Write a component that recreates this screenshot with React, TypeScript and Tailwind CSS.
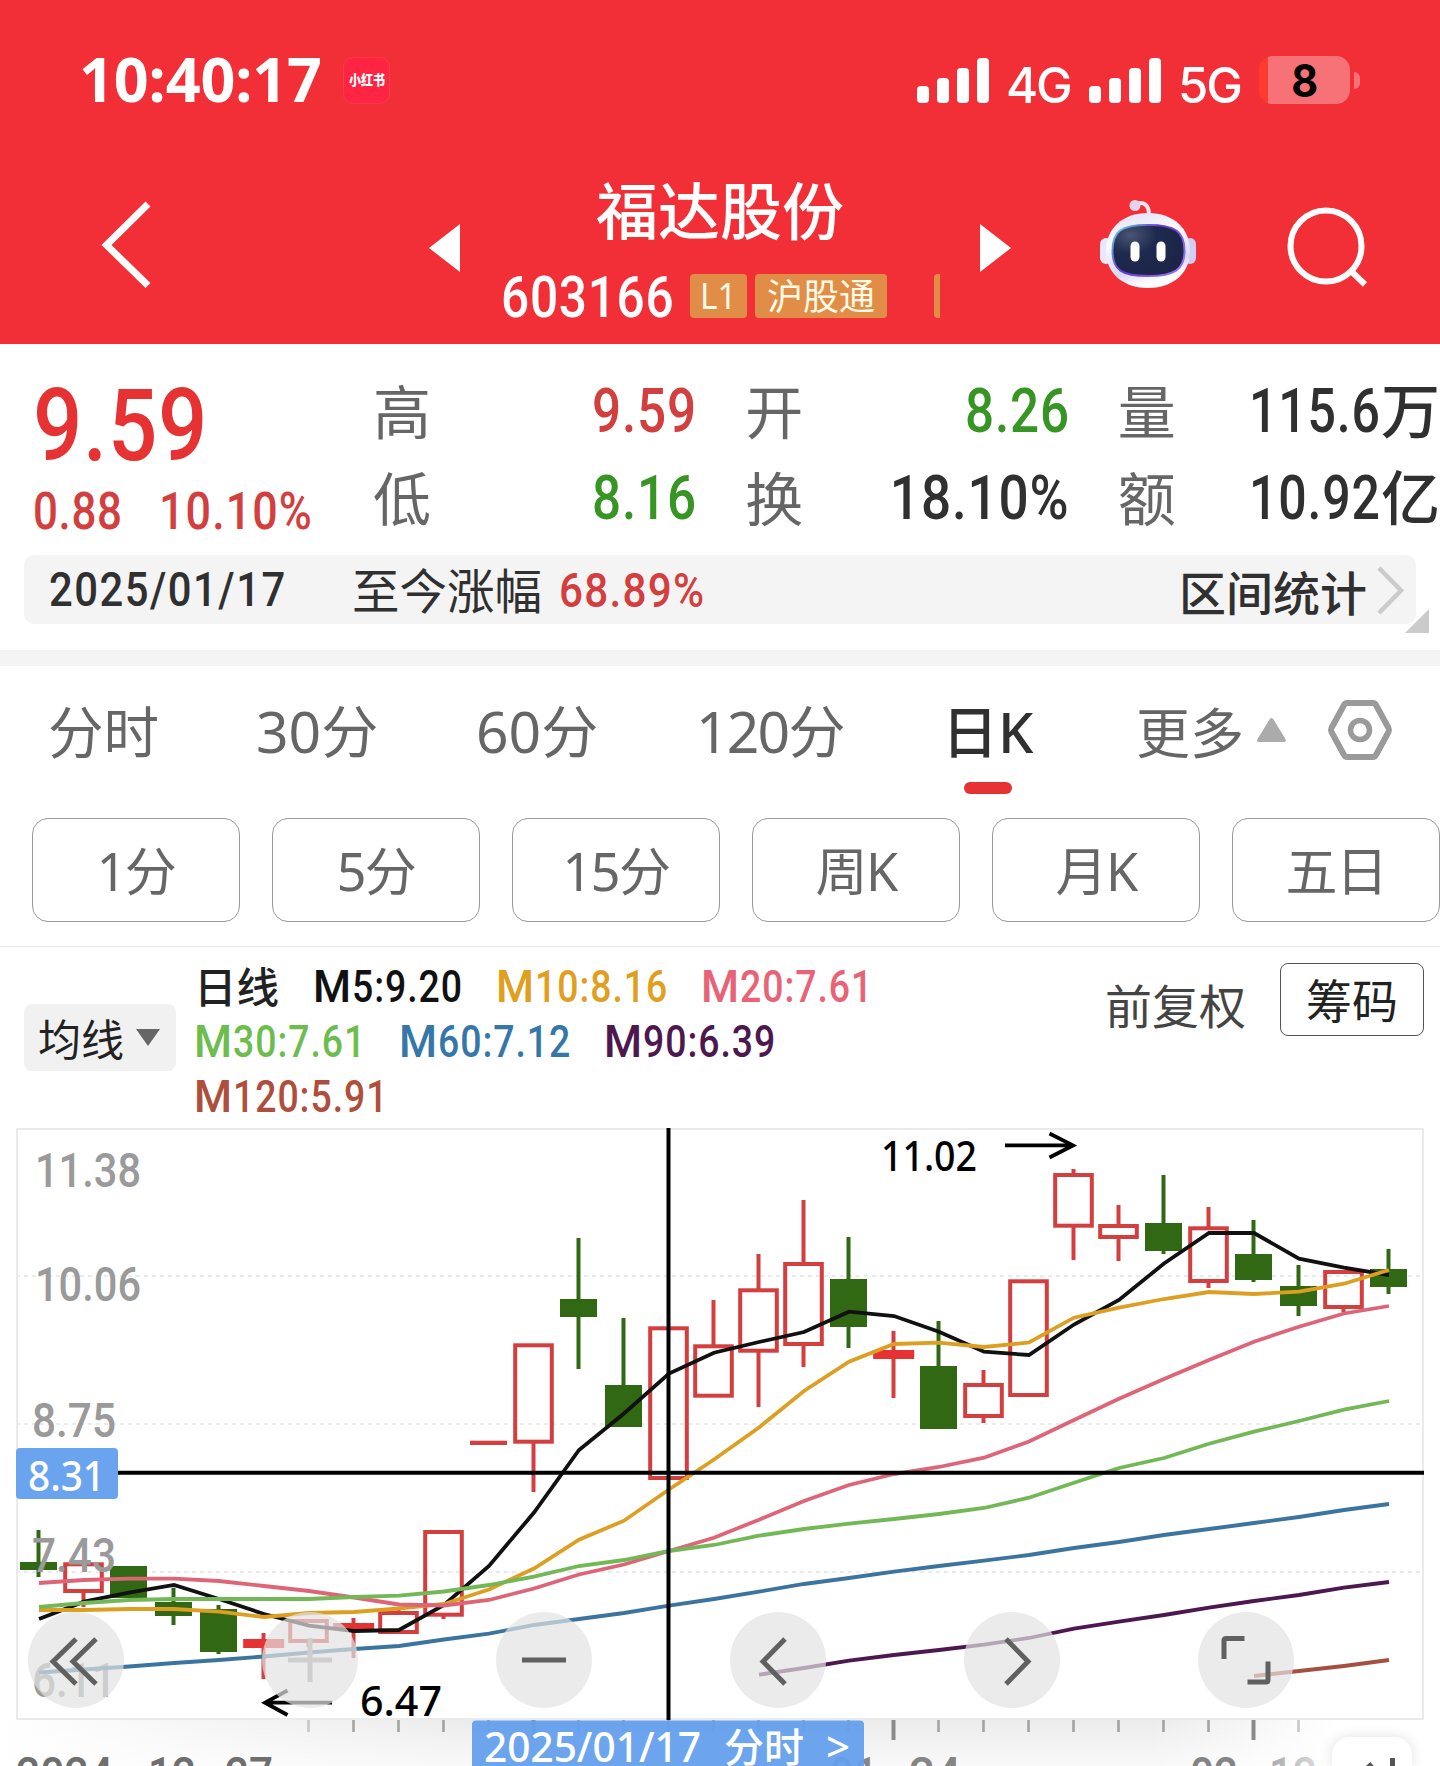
import type { ReactNode } from "react";

const CJK = "font-['Noto_Sans','Noto_Sans_CJK_SC',sans-serif]";
const DIN = "font-['Roboto','Noto_Sans_CJK_SC',sans-serif]";

type Candle = { kind: "up" | "down" | "flat"; top: number; bottom: number; high?: number; low?: number };

const candles: Candle[] = [
  { kind: "down", top: 1562, bottom: 1570, high: 1530, low: 1577 },
  { kind: "up", top: 1562.3, bottom: 1593, low: 1607 },
  { kind: "down", top: 1566, bottom: 1598 },
  { kind: "down", top: 1602, bottom: 1616, high: 1587.7, low: 1625 },
  { kind: "down", top: 1609, bottom: 1652, high: 1605, low: 1654 },
  { kind: "flat", top: 1639, bottom: 1648, high: 1633, low: 1679 },
  { kind: "up", top: 1619, bottom: 1643, low: 1647 },
  { kind: "flat", top: 1623, bottom: 1630, high: 1618, low: 1658 },
  { kind: "up", top: 1611, bottom: 1634, high: 1608 },
  { kind: "up", top: 1530, bottom: 1616.7, low: 1619 },
  { kind: "flat", top: 1440.7, bottom: 1445 },
  { kind: "up", top: 1343.3, bottom: 1443.7, low: 1492 },
  { kind: "down", top: 1299, bottom: 1317, high: 1238, low: 1369 },
  { kind: "down", top: 1385, bottom: 1427, high: 1318 },
  { kind: "up", top: 1326.3, bottom: 1480 },
  { kind: "up", top: 1344.3, bottom: 1397.7, high: 1300 },
  { kind: "up", top: 1288.3, bottom: 1352.7, high: 1254, low: 1407 },
  { kind: "up", top: 1262, bottom: 1346, high: 1200, low: 1367 },
  { kind: "down", top: 1279, bottom: 1327, high: 1237, low: 1348 },
  { kind: "flat", top: 1350, bottom: 1359, high: 1331, low: 1398 },
  { kind: "down", top: 1366, bottom: 1429, high: 1321 },
  { kind: "up", top: 1383, bottom: 1418, high: 1370, low: 1423 },
  { kind: "up", top: 1279.3, bottom: 1397 },
  { kind: "up", top: 1173, bottom: 1227.7, high: 1169, low: 1260 },
  { kind: "up", top: 1224, bottom: 1239, high: 1205, low: 1261 },
  { kind: "down", top: 1223, bottom: 1251, high: 1175, low: 1254 },
  { kind: "up", top: 1226.3, bottom: 1283, high: 1207, low: 1288 },
  { kind: "down", top: 1254, bottom: 1280, high: 1220, low: 1282 },
  { kind: "down", top: 1286, bottom: 1306, high: 1265, low: 1316 },
  { kind: "up", top: 1270, bottom: 1309, low: 1312 },
  { kind: "down", top: 1269, bottom: 1287, high: 1249, low: 1294 },
];

const averages: { color: string; start: number; ys: number[] }[] = [
  { color: "#3b759f", start: 0, ys: [1672.5, 1669.5, 1666.5, 1663, 1660, 1656.5, 1652.5, 1649, 1646, 1639.5, 1633.7, 1625, 1619, 1613, 1605.7, 1599, 1591.7, 1584, 1578, 1571.7, 1566, 1560.7, 1555, 1548, 1542, 1535, 1529, 1523, 1517, 1510, 1504] },
  { color: "#4d174f", start: 16, ys: [1674.7, 1668, 1660.7, 1655, 1650, 1644.7, 1638, 1628.7, 1621.7, 1615, 1607.7, 1601, 1595, 1587.7, 1582] },
  { color: "#a45040", start: 27, ys: [1676, 1671, 1666, 1660] },
  { color: "#111111", start: 0, ys: [1619, 1601.7, 1592.7, 1585, 1599, 1614, 1625.7, 1631, 1630, 1605, 1566, 1512.5, 1450, 1413.5, 1373.5, 1352.7, 1342, 1332, 1311.7, 1316, 1331.7, 1351.7, 1355, 1324.5, 1300, 1263.5, 1233, 1233, 1258.7, 1267.7, 1275] },
  { color: "#dd9f22", start: 0, ys: [1610, 1610, 1609, 1609, 1611.7, 1617, 1613, 1612, 1608.5, 1604, 1589.5, 1568.5, 1539.7, 1520.7, 1489.5, 1459.5, 1427.5, 1391, 1361.7, 1344, 1342.7, 1347, 1342.5, 1317.7, 1307.7, 1299, 1292, 1294, 1291.7, 1283.7, 1270] },
  { color: "#de6577", start: 0, ys: [1583, 1580, 1578.7, 1578.7, 1581, 1586, 1591, 1597.5, 1604.5, 1605.5, 1600, 1588.5, 1574.5, 1564.5, 1551, 1537.7, 1519.7, 1501, 1485, 1474, 1467, 1457.7, 1441.5, 1420, 1398.7, 1379, 1360, 1341.7, 1326.7, 1313.5, 1306] },
  { color: "#73b857", start: 0, ys: [1607, 1603, 1600, 1599, 1599, 1599, 1599, 1597, 1595.7, 1591.5, 1585, 1576.7, 1566, 1560, 1551, 1545, 1535.7, 1529, 1523.7, 1519, 1514, 1508, 1497.7, 1482.7, 1468, 1458, 1443.7, 1431.7, 1421, 1409.7, 1401] },
];

const xAt = (i: number) => 38.5 + 45 * i;
const RED = "#d33e3e";
const GREEN = "#306814";

function CandleMark({ c, i }: { c: Candle; i: number }) {
  const x = xAt(i);
  const color = c.kind === "down" ? GREEN : RED;
  const dash = c.bottom - c.top < 5;
  return (
    <g>
      {c.high !== undefined && <line x1={x} x2={x} y1={c.high} y2={c.top + 1} stroke={color} strokeWidth={4} />}
      {c.low !== undefined && <line x1={x} x2={x} y1={c.bottom - 1} y2={c.low} stroke={color} strokeWidth={4} />}
      {c.kind === "down" && <rect x={x - 18.5} y={c.top} width={37} height={c.bottom - c.top} fill={GREEN} />}
      {c.kind === "flat" && <rect x={x - (dash ? 18.5 : 20.3)} y={c.top} width={dash ? 37 : 41} height={c.bottom - c.top} fill={dash ? RED : "#e63232"} />}
      {c.kind === "up" && (
        <rect x={x - 18.3} y={c.top + 2} width={36.6} height={c.bottom - c.top - 4} fill="none" stroke={RED} strokeWidth={4} />
      )}
    </g>
  );
}

const axisLabels = [
  { t: "11.38", x: 37, y: 1187, w: 102 },
  { t: "10.06", x: 37, y: 1300.5, w: 102 },
  { t: "8.75", x: 34, y: 1437, w: 80 },
  { t: "7.43", x: 34, y: 1572, w: 80 },
  { t: "6.11", x: 34, y: 1697, w: 80 },
];

const FIT = "spacingAndGlyphs";

function Chart() {
  return (
    <svg className="block h-[646px] w-[1440px]" viewBox="0 1120 1440 646">
      <defs>
        <linearGradient id="shade" x1="0" x2="1">
          <stop offset="0" stopColor="#ffffff" />
          <stop offset="0.1" stopColor="#f8f8f8" />
          <stop offset="0.32" stopColor="#ececec" />
          <stop offset="0.8" stopColor="#ececec" />
          <stop offset="0.93" stopColor="#ffffff" />
        </linearGradient>
        <linearGradient id="lift" x1="0" x2="0" y1="0" y2="1">
          <stop offset="0" stopColor="#ffffff" stopOpacity="0" />
          <stop offset="1" stopColor="#ffffff" stopOpacity="0.7" />
        </linearGradient>
        <linearGradient id="fade" gradientUnits="userSpaceOnUse" x1="1191" x2="1316" y1="0" y2="0">
          <stop offset="0.3" stopColor="#858585" />
          <stop offset="1" stopColor="#d8d8d8" />
        </linearGradient>
      </defs>
      <rect x="0" y="1720" width="1440" height="46" fill="url(#shade)" />
      <rect x="0" y="1720" width="1440" height="46" fill="url(#lift)" />
      <g stroke="#ebebeb" strokeWidth="2" fill="none">
        <rect x="17" y="1129" width="1406" height="590" />
        <path d="M18 1276H1422M18 1424H1422M18 1572H1422" strokeDasharray="4 4" strokeDashoffset="2" />
      </g>
      {candles.map((c, i) => (
        <CandleMark key={i} c={c} i={i} />
      ))}
      <g className={`${DIN} font-medium`} fontSize="48.5" fill="#9a9a9a">
        {axisLabels.map((l) => (
          <text key={l.t} x={l.x - 2} y={l.y} textLength={l.w + 4} lengthAdjust={FIT}>{l.t}</text>
        ))}
      </g>
      {averages.map((m) => (
        <polyline
          key={m.color}
          points={m.ys.map((y, k) => `${xAt(m.start + k) + 0.5},${y}`).join(" ")}
          fill="none"
          stroke={m.color}
          strokeWidth={3.8}
        />
      ))}
      <g stroke="#000" fill="none">
        <path d="M668.5 1128V1720M118 1472.7H1424" strokeWidth="4" />
        <path d="M1005 1145.4H1073M1049.500 1133.500L1073 1145.400L1049.500 1157.500M265 1702.700H332M287.500 1690.500L265 1702.700L287.500 1715" strokeWidth="3.8" />
      </g>
      <g className={CJK} fontSize="41" fill="#000">
        <text x="881" y="1170.500" textLength="96" lengthAdjust={FIT} className="font-medium">11.02</text>
        <text x="360" y="1715.500" textLength="82" lengthAdjust={FIT} className="font-medium">6.47</text>
      </g>
      {candles.map((_, i) =>
        i < 6 || i > 28 ? null : (
          <rect
            key={i}
            x={xAt(i) - ((i - 3) % 8 === 0 ? 2 : 1.3)}
            y={1720}
            width={(i - 3) % 8 === 0 ? 4 : 2.6}
            height={(i - 3) % 8 === 0 ? 20 : 12}
            fill={(i - 3) % 8 === 0 ? "#8a8a8a" : i === 6 || i === 28 ? "#c8c8c8" : "#a3a3a3"}
          />
        ),
      )}
      <g className={`${DIN} font-medium`} fontSize="48.5" fill="#858585">
        <text x="16" y="1790.500" textLength="97" lengthAdjust={FIT} fill="#6f6f6f">2024</text>
        <text x="148" y="1790.500" textLength="48" lengthAdjust={FIT} fill="#6f6f6f">12</text>
        <text x="225" y="1790.500" textLength="48" lengthAdjust={FIT} fill="#6f6f6f">27</text>
        <text x="830" y="1790.500" textLength="48" lengthAdjust={FIT}>01</text>
        <text x="909" y="1790.500" textLength="52" lengthAdjust={FIT}>24</text>
        <text x="1190" y="1790.500" textLength="48" lengthAdjust={FIT}>02</text>
        <text x="1269" y="1790.500" textLength="48" lengthAdjust={FIT} fill="url(#fade)">12</text>
      </g>
      <rect x="16" y="1448" width="102" height="51" rx="4" fill="#6ba4ee" />
      <text x="28" y="1490.500" fontSize="42" textLength="77" lengthAdjust={FIT} fill="#fff" className={`${CJK} font-medium`}>8.31</text>
      <rect x="472" y="1720.500" width="392" height="60" rx="4" fill="#639fec" fillOpacity="0.94" />
      <g className={`${CJK} font-medium`} fontSize="42" fill="#fff">
        <text x="484" y="1762" textLength="217" lengthAdjust={FIT}>2025/01/17</text>
        <text x="724" y="1762" fontSize="40" textLength="80">分时</text>
        <text x="826" y="1762">&gt;</text>
      </g>
    </svg>
  );
}

const tools: { name: string; faint?: boolean; d: string }[] = [
  { name: "first", d: "M48 27L25 49.500L48 72M68 27L45 49.500L68 72" },
  { name: "zoom in", faint: true, d: "M26 48H70M48 26V70" },
  { name: "zoom out", d: "M26 48H70" },
  { name: "previous", d: "M55 27L33 49.500L55 72" },
  { name: "next", d: "M42 27L64 49.500L42 72" },
  { name: "full screen", d: "M26 47V28.500Q26 26.500 28 26.500H46.500M70 49.500V68Q70 70 68 70H49.500" },
];

function Tools() {
  return (
    <div className="absolute top-[492px] left-7 flex gap-[138px]">
      {tools.map((t) => (
        <button key={t.name} aria-label={t.name} className="size-24 rounded-full bg-[#e3e3e3]/70">
          <svg viewBox="0 0 96 96" className="size-24" fill="none" stroke={t.faint ? "#cfcfcf" : "#606060"} strokeWidth="5">
            <path d={t.d} />
          </svg>
        </button>
      ))}
    </div>
  );
}

function Signal() {
  return (
    <div className="flex h-[45px] w-[72px] items-end justify-between">
      <i className="h-[17px] w-3 rounded-[4px] bg-white" />
      <i className="h-[25px] w-3 rounded-[4px] bg-white" />
      <i className="h-[35px] w-3 rounded-[4px] bg-white" />
      <i className="h-[45px] w-3 rounded-[4px] bg-white" />
    </div>
  );
}

function StatusBar() {
  return (
    <div className="flex h-[160px] items-center pl-[79px] text-white">
      <span className={`${CJK} -mt-[3px] w-[264px] text-[61px] leading-none font-bold tracking-[-0.1px]`}>10:40:17</span>
      <span className={`${CJK} flex size-[47px] items-center justify-center rounded-[10px] border border-[#fb3a4c] bg-[#ff2442] text-[14px] leading-none font-black`}>
        <b className="scale-x-[0.86] whitespace-nowrap">小红书</b>
      </span>
      <div className="ml-[527px] flex items-center">
        <Signal />
        <span className="mt-[10px] ml-[17px] w-[83px] font-['Inter'] text-[49px] leading-none font-medium tracking-[-2.100px]">4G</span>
        <Signal />
        <span className="mt-[10px] ml-[17px] w-[81px] font-['Inter'] text-[49px] leading-none font-medium tracking-[-2.100px]">5G</span>
        <div className="flex h-12 w-[91px] items-center justify-center rounded-[14px] bg-[linear-gradient(90deg,#ff3b30_9px,#f77277_9px)] font-['Inter'] text-[45px] leading-none font-bold text-black">
          <span className="scale-x-[0.92]">8</span>
        </div>
        <i className="ml-1 h-[17px] w-[6px] rounded-r-full bg-[#f77277]" />
      </div>
    </div>
  );
}

function Robot() {
  return (
    <svg viewBox="1098 198 100 92" className="h-[92px] w-[100px]">
      <defs>
        <linearGradient id="shell" x1="0" x2="0.3" y1="0" y2="1">
          <stop offset="0" stopColor="#dcdcf6" />
          <stop offset="0.4" stopColor="#fbfbff" />
          <stop offset="0.8" stopColor="#d9d8f6" />
          <stop offset="1" stopColor="#ffffff" />
        </linearGradient>
        <linearGradient id="visor" x1="0" x2="1" y1="0" y2="0.6">
          <stop offset="0" stopColor="#62d5ea" />
          <stop offset="0.5" stopColor="#6a35c9" />
          <stop offset="1" stopColor="#8b6df0" />
        </linearGradient>
        <radialGradient id="glass" cx="0.25" cy="0.2" r="0.9">
          <stop offset="0" stopColor="#4a5573" />
          <stop offset="0.4" stopColor="#1e2a50" />
          <stop offset="1" stopColor="#1c2446" />
        </radialGradient>
      </defs>
      <path d="M1136 204C1144 201 1149 205 1149 215" fill="none" stroke="#f0e4f2" strokeWidth="4" />
      <circle cx="1135" cy="205.500" r="5.500" fill="#e3d3ee" />
      <rect x="1100" y="238" width="12" height="26" rx="6" fill="#e9e8fb" />
      <rect x="1184" y="238" width="12" height="26" rx="6" fill="#cfcdf6" />
      <path d="M1148 213C1174 213 1190 229 1190 251C1190 274 1172 288 1148 288C1124 288 1106 274 1106 251C1106 229 1122 213 1148 213Z" fill="url(#shell)" />
      <path d="M1148 225C1175 225 1184.500 231 1184.500 251C1184.500 270 1174 276 1148 276C1122 276 1112.500 270 1112.500 251C1112.500 231 1121 225 1148 225Z" fill="url(#glass)" stroke="url(#visor)" strokeWidth="2" />
      <rect x="1130.500" y="241.500" width="9" height="20" rx="4.500" fill="#fff" />
      <rect x="1156.500" y="241.500" width="9" height="20" rx="4.500" fill="#fff" />
    </svg>
  );
}

function TitleBar() {
  return (
    <div className="flex h-[184px] pl-[100px] text-white">
      <svg viewBox="100 200 52 90" className="mt-10 h-[90px] w-[52px]" fill="none" stroke="#fff" strokeWidth="7">
        <path d="M148 204L106.500 245L148 285.500" />
      </svg>
      <svg viewBox="0 0 31 48" className="mt-16 ml-[277px] h-12 w-[31px]" fill="#fff"><path d="M31 0V48L0 24Z" /></svg>
      <div className="ml-9 flex w-[445px] flex-col">
        <h1 className={`${CJK} mt-[19px] ml-[100px] text-[62px] leading-[64px] font-medium`}>福达股份</h1>
        <div className="mt-[31px] flex h-11 items-center">
          <span className={`${DIN} mt-0.5 ml-[5px] w-[189px] origin-left scale-x-[0.87] text-[57px] leading-none font-medium tracking-[0.800px]`}>603166</span>
          <span className={`${CJK} flex h-11 w-[57px] items-center justify-center rounded-[4px] bg-[#e18d48] pb-[3px] text-[37px] leading-none text-[#fffbe6]`}><span className="scale-x-90">L1</span></span>
          <span className={`${CJK} ml-[8px] flex h-11 w-[132px] items-center justify-center rounded-[4px] bg-[#e18d48] pt-[2px] text-[36px] leading-none text-[#fffbe6]`}>沪股通</span>
          <i className="ml-[47px] h-11 w-[6px] rounded-l-[4px] bg-[#e18d48]" />
        </div>
      </div>
      <svg viewBox="0 0 31 48" className="mt-16 ml-[39px] h-12 w-[31px]" fill="#fff"><path d="M0 0V48L31 24Z" /></svg>
      <div className="mt-[38px] ml-[87px]"><Robot /></div>
      <svg viewBox="1284 204 86 86" className="mt-11 ml-[86px] size-[86px]" fill="none" stroke="#fff" strokeWidth="6">
        <circle cx="1326" cy="246" r="35.500" />
        <path d="M1350 270L1365 284.500" />
      </svg>
    </div>
  );
}

function Stat({ label, color, unit, fit = "scale-x-[0.84]", children }: { label: string; color: string; unit?: string; fit?: string; children: ReactNode }) {
  return (
    <div className="flex h-[87px] items-center justify-between">
      <span className={`${CJK} mt-1 text-[58px] leading-none text-[#666]`}>{label}</span>
      <span className={`flex items-center text-[61px] leading-none font-medium whitespace-nowrap ${color}`}>
        <span className={`${DIN} mt-1 origin-right tracking-[1px] ${unit ? "" : "-mr-0.5"} ${fit}`}>{children}</span>
        {unit && <span className={`${CJK} mt-0.5 text-[59px]`}>{unit}</span>}
      </span>
    </div>
  );
}

function Quote() {
  return (
    <section className="flex h-[211px] pt-[22px]">
      <div className={`${DIN} w-[373px] shrink-0 pl-[33px] font-medium`}>
        <div className="mt-[10px] origin-left scale-x-[0.86] text-[101px] leading-[100px] tracking-[0.800px] text-[#e63232]">9.59</div>
        <div className="mt-[8px] flex text-[51px] leading-[56px] tracking-[0.800px] text-[#d33e3e]">
          <span className="w-[126px] origin-left scale-x-[0.86]">0.88</span>
          <span className="origin-left scale-x-[0.88] tracking-[1.200px]">10.10%</span>
        </div>
      </div>
      <div className="grid w-[1067px] grid-cols-3 content-start gap-x-[50px]">
        <Stat label="高" color="text-[#d33e3e]">9.59</Stat>
        <Stat label="开" color="text-[#379524]">8.26</Stat>
        <Stat label="量" color="text-[#303030]" unit="万" fit="scale-x-[0.82]">115.6</Stat>
        <Stat label="低" color="text-[#379524]">8.16</Stat>
        <Stat label="换" color="text-[#303030]" fit="scale-x-[0.87]">18.10%</Stat>
        <Stat label="额" color="text-[#303030]" unit="亿" fit="scale-x-[0.82]">10.92</Stat>
      </div>
    </section>
  );
}

function RangeBar() {
  return (
    <section className="relative h-[95px] px-6">
      <div className="flex h-[69px] items-center rounded-[10px] bg-[#f4f4f4] pl-[25px] text-[#303030]">
        <span className={`${DIN} mt-0.5 w-[303px] origin-left scale-x-[0.88] text-[47.500px] leading-none font-medium tracking-[1.700px]`}>2025/01/17</span>
        <span className={`${CJK} mt-0.5 w-[206px] text-[47.500px] leading-none`}>至今涨幅</span>
        <span className={`${DIN} mt-0.5 ml-px origin-left scale-x-[0.88] text-[48px] leading-none font-medium tracking-[1.400px] text-[#d33e3e]`}>68.89%</span>
        <span className={`${CJK} mt-2 ml-auto text-[47px] leading-none font-medium`}>区间统计</span>
        <svg viewBox="0 0 30 50" className="mr-[10px] ml-[9px] h-[50px] w-[30px]" fill="none" stroke="#cbcbcb" strokeWidth="4.500">
          <path d="M3 3L25 25.500L3 48" />
        </svg>
      </div>
      <svg viewBox="0 0 24 24" className="absolute top-[54px] left-[1405px] size-6" fill="#cbcbcb"><path d="M24 0V24H0Z" /></svg>
    </section>
  );
}

function Tabs() {
  return (
    <nav className={`${CJK} flex h-[152px] pt-[35px] pl-[48px] text-[57px] leading-[60px] whitespace-nowrap text-[#666]`}>
      <span className="mt-px w-[208px] text-[55.500px]">分时</span>
      <span className="w-[220px]">30分</span>
      <span className="w-[220px]">60分</span>
      <span className="w-[246px] tracking-[-1.800px]">120分</span>
      <span className="flex w-[195px] flex-col text-[56px] font-medium text-[#303030]">
        日K
        <i className="mt-[21px] ml-[22px] h-3 w-12 rounded-full bg-[#e63232]" />
      </span>
      <span className="mt-0.5 -ml-px w-[121px] text-[54px]">更多</span>
      <svg viewBox="0 0 29 24" className="mt-[17px] h-6 w-[29px]" fill="#ababab"><path d="M12.500 1.500Q14.500 -1.500 16.500 1.500L28.500 21Q29.500 24 27 24H2Q-.5 24 .5 21Z" /></svg>
      <svg viewBox="0 0 66 62" className="-mt-0.5 ml-[41px] h-[62px] w-[66px]" fill="none" stroke="#9a9a9a">
        <path d="M20 4H46Q48 4 49 6L61.500 29Q62.500 31 61.500 33L49 56Q48 58 46 58H20Q18 58 17 56L4.500 33Q3.500 31 4.500 29L17 6Q18 4 20 4Z" strokeWidth="6" />
        <circle cx="33" cy="31" r="9.500" strokeWidth="5.500" />
      </svg>
    </nav>
  );
}

function Periods() {
  return (
    <div className="flex h-[129px] gap-8 border-b border-[#e4e4e4] pl-8">
      {["1分", "5分", "15分", "周K", "月K", "五日"].map((p) => (
        <button key={p} className={`${CJK} h-[104px] w-[208px] shrink-0 rounded-2xl border border-[#999] text-[52px] leading-[104px] tracking-[-1.500px] text-[#666]`}>
          {p}
        </button>
      ))}
    </div>
  );
}

function Ma({ width, color, children }: { width: string; color: string; children: string }) {
  return (
    <span className={`flex ${width} ${color}`}>
      <span className="w-[39px]">M</span>
      <span className="origin-left scale-x-[0.86] tracking-[1.100px]">{children}</span>
    </span>
  );
}

function Legend() {
  return (
    <section className="flex h-[173px] pl-6">
      <button className={`${CJK} mt-[57px] flex h-[67px] w-[152px] items-center rounded-[8px] bg-[#f1f1f1] pl-[14px] text-[43px] leading-none text-[#222]`}>
        <span className="mt-1 w-[98px] text-left">均线</span>
        <svg viewBox="0 0 24 17" className="h-[17px] w-6" fill="#666"><path d="M0 0H24L12 17Z" /></svg>
      </button>
      <div className={`${DIN} mt-[13px] ml-[18px] w-[911px] text-[43.500px] leading-[55px] font-medium`}>
        <div className="flex">
          <span className="mt-px w-[119px] text-[42.500px] tracking-normal text-[#222]">日线</span>
          <Ma width="w-[183px]" color="text-[#111]">5:9.20</Ma>
          <Ma width="w-[205px]" color="text-[#e09f1f]">10:8.16</Ma>
          <Ma width="w-[200px]" color="text-[#e96376]">20:7.61</Ma>
        </div>
        <div className="-mt-px flex">
          <Ma width="w-[205px]" color="text-[#6dbd4e]">30:7.61</Ma>
          <Ma width="w-[205px]" color="text-[#3577a8]">60:7.12</Ma>
          <Ma width="w-[200px]" color="text-[#4d174f]">90:6.39</Ma>
        </div>
        <Ma width="w-[220px]" color="text-[#ae4f3d]">120:5.91</Ma>
      </div>
      <span className={`${CJK} mt-[33px] w-[175px] text-[47px] leading-[52px] text-[#444]`}>前复权</span>
      <button className={`${CJK} mt-4 h-[73px] w-[144px] rounded-[8px] border border-[#555] text-[46px] leading-[72px] text-[#222]`}>筹码</button>
    </section>
  );
}

export default function App() {
  return (
    <main className="h-[1766px] w-[1440px] overflow-hidden bg-white">
      <header className="h-[344px] bg-[#f22f37]">
        <StatusBar />
        <TitleBar />
      </header>
      <Quote />
      <RangeBar />
      <div className="h-4 bg-[#f4f4f4]" />
      <Tabs />
      <Periods />
      <Legend />
      <section className="relative h-[646px]">
        <Chart />
        <Tools />
        <button aria-label="rotate" className="absolute top-[617px] left-[1332px] h-[29px] w-20 overflow-hidden rounded-t-[18px] bg-white shadow-[0_0_14px_rgba(0,0,0,0.12)]">
          <svg viewBox="0 0 80 29" className="h-[29px] w-20" fill="none" stroke="#555" strokeWidth="5">
            <path d="M60.500 21V40M32 34L40 27" />
          </svg>
        </button>
      </section>
    </main>
  );
}
